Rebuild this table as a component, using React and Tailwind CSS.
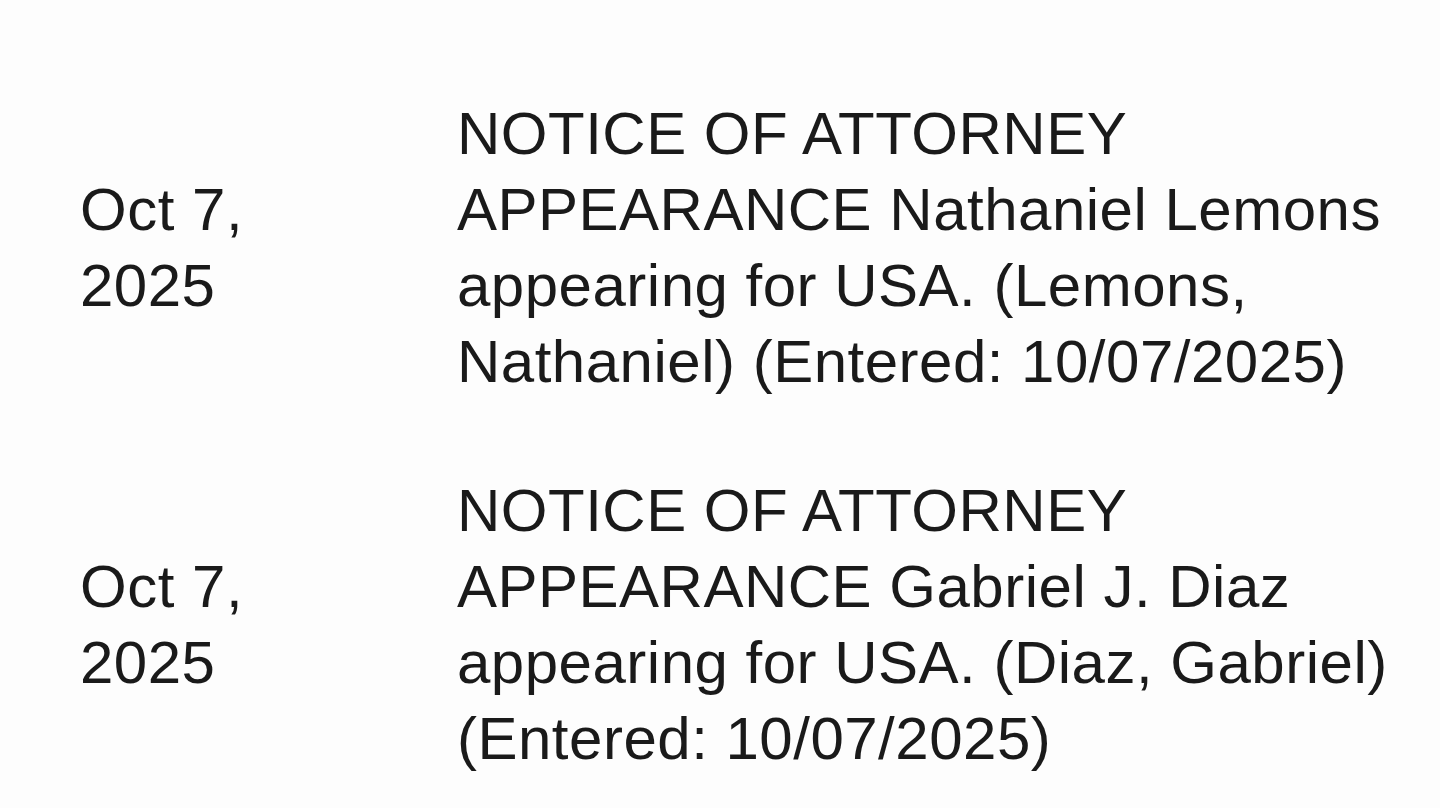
export default function App() {
  const rows = [
    {
      date: "Oct 7, 2025",
      text: "NOTICE OF ATTORNEY APPEARANCE Nathaniel Lemons appearing for USA. (Lemons, Nathaniel) (Entered: 10/07/2025)",
    },
    {
      date: "Oct 7, 2025",
      text: "NOTICE OF ATTORNEY APPEARANCE Gabriel J. Diaz appearing for USA. (Diaz, Gabriel) (Entered: 10/07/2025)",
    },
  ];
  return (
    <div
      className="w-full h-[808px] overflow-hidden bg-[#fdfdfd] text-[#1a1a1a] pt-[96px] pl-[80px]"
      style={{ fontFamily: '"Liberation Sans", Arial, Helvetica, sans-serif' }}
    >
      <div className="flex flex-col gap-[73px]">
        {rows.map((r, i) => (
          <div key={i} className="grid grid-cols-[377px_960px] items-center text-[60px] leading-[76px] tracking-[0.5px]">
            <div className="w-[270px]">{r.date}</div>
            <div>{r.text}</div>
          </div>
        ))}
      </div>
    </div>
  );
}
